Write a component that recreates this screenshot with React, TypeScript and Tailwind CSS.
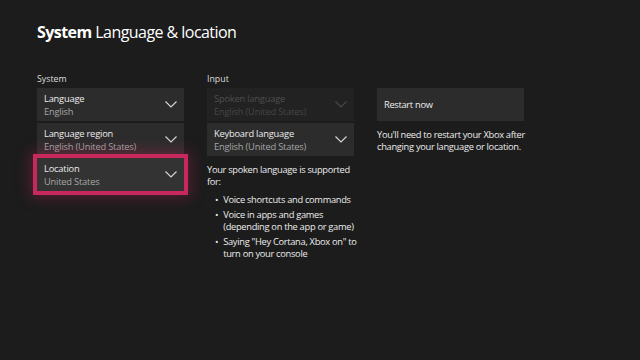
import React from "react";

const Chevron = ({ dim = false }: { dim?: boolean }) => (
  <svg width="12" height="7" viewBox="0 0 12 7" className="shrink-0">
    <polyline points="0.5,0.5 6,6 11.5,0.5" fill="none" stroke={dim ? "#4a4a4a" : "#d8d8d8"} strokeWidth="1.1" />
  </svg>
);

const Card = ({ title, value, dim = false, selected = false }: { title: string; value: string; dim?: boolean; selected?: boolean }) => (
  <div
    className={
      "flex h-[33px] items-center justify-between pl-[7px] pr-[7px] " +
      (selected
        ? "bg-[#333333] outline-[4px] outline-solid outline-[#c8285c] shadow-[0_0_14px_6px_rgba(200,40,92,0.35)]"
        : dim
        ? "bg-[#222222]"
        : "bg-[#2c2c2c]")
    }
  >
    <div className="flex flex-col pt-[1px] leading-[13px] tracking-[-0.2px]">
      <span className={"text-[9.3px] " + (dim ? "text-[#4e4e4e]" : "text-[#ececec]")}>{title}</span>
      <span className={"text-[9.3px] " + (dim ? "text-[#454545]" : "text-[#a6a6a6]")}>{value}</span>
    </div>
    <Chevron dim={dim} />
  </div>
);

export default function App() {
  return (
    <div
      className="h-[360px] w-[640px] overflow-hidden bg-[#1c1c1c] pl-[37px] pt-[20px] text-[#ececec]"
      style={{ fontFamily: '"Open Sans", "Noto Sans", sans-serif' }}
    >
      <h1 className="text-[16px] leading-[24px] tracking-[-0.55px] text-white">
        <span className="font-bold">System</span> Language &amp; location
      </h1>
      <div className="mt-[29px] flex gap-[23px]">
        <div className="w-[147px]">
          <div className="mb-[3px] text-[8.8px] leading-[12px] text-[#dcdcdc]">System</div>
          <div className="flex flex-col gap-[2px]">
            <Card title="Language" value="English" />
            <Card title="Language region" value="English (United States)" />
            <Card title="Location" value="United States" selected />
          </div>
        </div>
        <div className="w-[147px]">
          <div className="mb-[3px] text-[8.8px] leading-[12px] text-[#dcdcdc]">Input</div>
          <div className="flex flex-col gap-[2px]">
            <Card title="Spoken language" value="English (United States)" dim />
            <Card title="Keyboard language" value="English (United States)" />
          </div>
          <div className="whitespace-nowrap tracking-[-0.3px]">
            <p className="mt-[8px] text-[9.3px] leading-[12px] text-[#ececec]">
              Your spoken language is supported
              <br />
              for:
            </p>
            <ul className="mt-[6px] flex flex-col gap-[3px] text-[9.3px] leading-[12px] text-[#ececec]">
              <li className="flex gap-[5px] pl-[8px]">
                <span>•</span>
                <span>Voice shortcuts and commands</span>
              </li>
              <li className="flex gap-[5px] pl-[8px]">
                <span>•</span>
                <span>
                  Voice in apps and games
                  <br />
                  (depending on the app or game)
                </span>
              </li>
              <li className="flex gap-[5px] pl-[8px]">
                <span>•</span>
                <span>
                  Saying "Hey Cortana, Xbox on" to
                  <br />
                  turn on your console
                </span>
              </li>
            </ul>
          </div>
        </div>
        <div className="w-[160px] whitespace-nowrap tracking-[-0.3px]">
          <div className="mb-[3px] h-[12px]" />
          <div className="flex h-[33px] w-[147px] items-center bg-[#2c2c2c] pl-[7px] text-[9.3px] text-[#ececec]">Restart now</div>
          <p className="mt-[8px] text-[9.3px] leading-[12px] text-[#ececec]">
            You'll need to restart your Xbox after
            <br />
            changing your language or location.
          </p>
        </div>
      </div>
    </div>
  );
}
